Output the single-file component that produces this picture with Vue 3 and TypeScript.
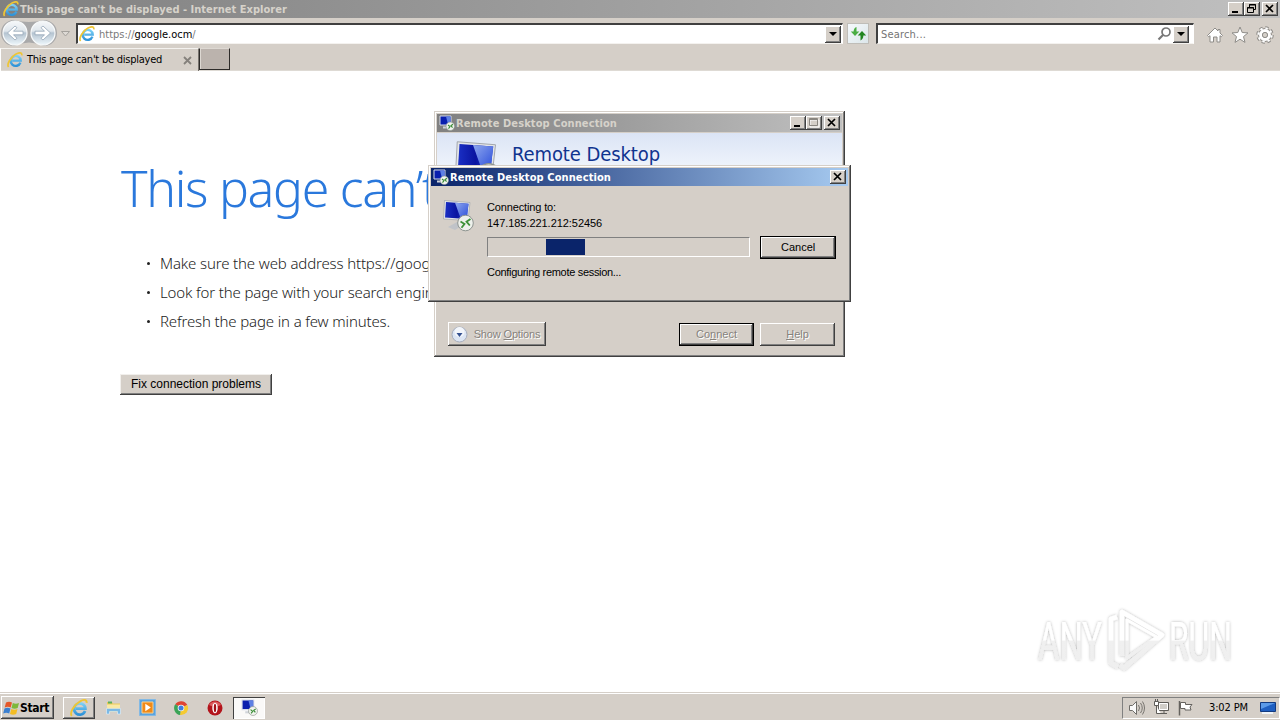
<script setup lang="ts">
const tips: string[] = [
  'Make sure the web address https://google.ocm is correct.',
  'Look for the page with your search engine.',
  'Refresh the page in a few minutes.',
]
</script>

<template>
  <div class="desktop">
    <svg class="defs" width="0" height="0" aria-hidden="true">
      <defs>
        <linearGradient id="ieBlue" x1="0" y1="0" x2="0" y2="1">
          <stop offset="0" stop-color="#7cd0f6" />
          <stop offset="1" stop-color="#2f93d8" />
        </linearGradient>
        <linearGradient id="screen" x1="0" y1="0" x2="1" y2="0">
          <stop offset="0" stop-color="#1a2fc4" />
          <stop offset=".5" stop-color="#0a14a0" />
          <stop offset="1" stop-color="#2444d6" />
        </linearGradient>
        <linearGradient id="glare" x1="0" y1="0" x2="1" y2="1">
          <stop offset="0" stop-color="#8fa8ee" />
          <stop offset="1" stop-color="#2a4cda" />
        </linearGradient>
        <linearGradient id="orb" x1="0" y1="0" x2="0" y2="1">
          <stop offset="0" stop-color="#f6f8fa" />
          <stop offset=".42" stop-color="#dfe6ec" />
          <stop offset=".5" stop-color="#b4c3d0" />
          <stop offset="1" stop-color="#eef7fc" />
        </linearGradient>
      </defs>
      <symbol id="ie" viewBox="0 0 16 16">
        <path d="M13.400 10.600A5 5 0 1 1 13.700 8.600H5.200" fill="none" stroke="url(#ieBlue)" stroke-width="2.400" />
        <path d="M1.600 15C-.6 12.600 3.500 5 9 2.100 12.400.2 15.200.2 14.800 3.400" fill="none" stroke="#eec536" stroke-width="1.700" />
      </symbol>
      <symbol id="rdc" viewBox="0 0 32 32">
        <path d="M5 27l9-5 6 3-8 5z" fill="#c0c3c8" />
        <path d="M1.500.5L27 2.500 25 20.500.5 19z" fill="#e3e5e8" stroke="#9b9fa5" stroke-width=".6" />
        <path d="M3 2l22.500 1.700L23.700 19 2 17.500z" fill="url(#screen)" />
        <path d="M12 2.700l13.500 1L23.700 19l-6-.4z" fill="url(#glare)" />
        <circle cx="22.500" cy="23" r="7.800" fill="#eef1ec" stroke="#8e9490" stroke-width="1" />
        <path d="M17.500 21.500l4 2.500-3 3.800M27.500 19l-4 2.700 3.300 3.800" fill="none" stroke="#3d9138" stroke-width="1.800" />
      </symbol>
      <symbol id="rdc16" viewBox="0 0 16 16">
        <path d="M1 1h11v9H1z" fill="#0a1fae" stroke="#d5dbe8" />
        <path d="M7 1.500h4.500v8H9z" fill="#5d80e4" />
        <path d="M4 11.500h5v2H4z" fill="#d0d4da" />
        <circle cx="11.300" cy="11.300" r="4.200" fill="#f1f4ef" stroke="#8d948e" stroke-width=".6" />
        <path d="M9 10l2 1.600-1.500 2M13.900 9.300l-1.900 1.400 1.500 1.900" fill="none" stroke="#378b33" stroke-width="1.100" />
      </symbol>
      <symbol id="close" viewBox="0 0 16 14">
        <path d="M4 3l7 7M11 3l-7 7" stroke="#000" stroke-width="1.700" />
      </symbol>
    </svg>

    <header class="titlebar">
      <svg class="i16"><use href="#ie" /></svg>
      <span class="title">This page can't be displayed - Internet Explorer</span>
      <div class="controls">
        <i class="ctl"><svg width="16" height="14"><path d="M4 9h6v2H4z" /></svg></i>
        <i class="ctl"><svg width="16" height="14"><path d="M5.500 5V2.500h6v5H9M5 3h7M3.500 5.500h6v5h-6zM3 6h7" fill="none" stroke="#000" /></svg></i>
        <i class="ctl gap"><svg width="16" height="14"><use href="#close" /></svg></i>
      </div>
    </header>

    <nav class="navbar">
      <svg class="orbs" width="76" height="29">
        <path d="M14 2Q29 6 44 2A13 13 0 0 1 44 28Q29 21 14 28A13 13 0 0 1 14 2Z" fill="#a9a9aa" />
        <circle cx="15" cy="15" r="12" fill="url(#orb)" stroke="#f7f9fa" stroke-width="1.200" />
        <circle cx="43" cy="15" r="12" fill="url(#orb)" stroke="#f7f9fa" stroke-width="1.200" />
        <path d="M23 13.200h-9.500l3.500-3.500-2-1.700-7.500 7 7.500 7 2-1.700-3.500-3.500H23zM35 13.200h9.500L41 9.700 43 8l7.500 7-7.500 7-2-1.700 3.500-3.500H35z" fill="#fff" stroke="#94a6b7" stroke-width=".8" />
        <path d="M61.500 13.500h8l-4 4.500z" fill="#dedad5" stroke="#a5a29d" />
      </svg>
      <div class="address field">
        <svg class="i16"><use href="#ie" /></svg>
        <span class="url">https://<b>google.ocm</b>/</span>
        <i class="drop"></i>
      </div>
      <div class="refresh">
        <svg width="20" height="19"><path d="M8.500 3v4.500h2.800L7 12 2.800 7.500h2.800C5.600 5.300 7 3.500 8.500 3z" fill="#4aad43" /><path d="M12.500 16.500v-5H9.700L14 7l4.200 4.500h-2.800c0 2.500-1.400 4.500-2.900 5z" fill="#238622" /></svg>
      </div>
      <div class="search field">
        <span class="hint">Search...</span>
        <svg width="15" height="16"><circle cx="9" cy="6" r="4" fill="none" stroke="#777" stroke-width="1.700" /><path d="M6 9l-4.500 4.500" stroke="#777" stroke-width="2.200" /></svg>
        <i class="drop"></i>
      </div>
      <div class="tools">
        <svg width="18" height="18"><path d="M1.500 9.500L9 2l3 3V3.500h2V7l2.500 2.500-1.200 1.200-1.300-1V16H11v-5H7.500v5H4V9.700l-1.300 1z" fill="#fff" stroke="#8e8c88" /></svg>
        <svg width="18" height="18"><path d="M9 1l2.200 5.500 5.800.4-4.500 3.700 1.500 5.800-5-3.200-5 3.200 1.500-5.800L1 6.900l5.800-.4z" fill="#fff" stroke="#8e8c88" /></svg>
        <svg width="18" height="18"><circle cx="9" cy="9" r="7" fill="none" stroke="#8e8c88" stroke-width="3.500" stroke-dasharray="3.100 2.398" /><circle cx="9" cy="9" r="4.500" fill="none" stroke="#8e8c88" stroke-width="5" /><circle cx="9" cy="9" r="6.700" fill="none" stroke="#fff" stroke-width="2" stroke-dasharray="2.400 2.862" stroke-dashoffset="-.2" /><circle cx="9" cy="9" r="4.300" fill="none" stroke="#fff" stroke-width="3.300" /><circle cx="9" cy="9" r="2.600" fill="#d5d0c9" stroke="#8e8c88" /></svg>
      </div>
    </nav>

    <div class="tabs">
      <div class="tab">
        <svg class="i16"><use href="#ie" /></svg>
        <span class="tabname">This page can't be displayed</span>
        <svg class="tabclose" width="9" height="9"><path d="M1 1l7 7M8 1L1 8" stroke="#85817c" stroke-width="1.800" /></svg>
      </div>
      <div class="newtab"></div>
    </div>

    <main class="page">
      <h1>This page can’t be displayed</h1>
      <ul>
        <li v-for="tip in tips" :key="tip">{{ tip }}</li>
      </ul>
      <button class="fix">Fix connection problems</button>
    </main>

    <svg class="watermark" width="240" height="84" viewBox="1024 600 240 84">
      <defs>
        <linearGradient id="wm" gradientUnits="userSpaceOnUse" x1="0" y1="610" x2="0" y2="670">
          <stop offset="0" stop-color="#fff" />
          <stop offset=".5" stop-color="#fff" />
          <stop offset=".52" stop-color="#f0f0f0" />
          <stop offset="1" stop-color="#efefef" />
        </linearGradient>
        <filter id="soft" x="-10%" y="-20%" width="120%" height="140%">
          <feDropShadow dx="0" dy="0" stdDeviation="1.600" flood-color="#000" flood-opacity=".3" />
        </filter>
      </defs>
      <g filter="url(#soft)" fill="url(#wm)">
        <text x="1038" y="660" textLength="64" lengthAdjust="spacingAndGlyphs">ANY</text>
        <text x="1169" y="660" textLength="63" lengthAdjust="spacingAndGlyphs">RUN</text>
        <g fill="none" stroke="url(#wm)" stroke-width="4.500" stroke-linejoin="round">
          <path d="M1117 617l-6 2v44l7 4" />
          <path d="M1122 656V612l40 23-38 33-4-3" />
          <path d="M1127 620v38l30-21z" stroke-width="3" />
        </g>
      </g>
    </svg>

    <section class="window back">
      <div class="caption inactive">
        <svg class="i16"><use href="#rdc16" /></svg>
        <span class="title">Remote Desktop Connection</span>
        <div class="controls">
          <i class="ctl"><svg width="16" height="14"><path d="M4 9h6v2H4z" /></svg></i>
          <i class="ctl"><svg width="16" height="14"><path d="M4 4h9v7H4z" fill="none" stroke="#fff" /><path d="M3.500 2.500h8v7h-8zM3 3.500h9" fill="none" stroke="#8a8680" /></svg></i>
          <i class="ctl gap"><svg width="16" height="14"><use href="#close" /></svg></i>
        </div>
      </div>
      <div class="banner">
        <svg width="48" height="48"><use href="#rdc" /></svg>
        <span>Remote Desktop</span>
      </div>
      <div class="footer">
        <button class="btn disabled options">
          <svg width="17" height="17"><circle cx="8.500" cy="8.500" r="7.500" fill="#dce5f3" stroke="#a7aebd" /><circle cx="8.500" cy="6" r="5" fill="#f3f6fb" /><path d="M5.500 7h6l-3 4z" fill="#34508f" /></svg>
          <span>Show <u>O</u>ptions</span>
        </button>
        <button class="btn disabled default"><span>Co<u>n</u>nect</span></button>
        <button class="btn disabled"><span><u>H</u>elp</span></button>
      </div>
    </section>

    <section class="window front">
      <div class="caption active">
        <svg class="i16"><use href="#rdc16" /></svg>
        <span class="title">Remote Desktop Connection</span>
        <div class="controls">
          <i class="ctl"><svg width="16" height="14"><use href="#close" /></svg></i>
        </div>
      </div>
      <div class="body">
        <svg class="big" width="32" height="32"><use href="#rdc" /></svg>
        <div class="status">
          <p class="to">Connecting to:</p>
          <p class="ip">147.185.221.212:52456</p>
          <div class="progress"><div class="chunk"></div></div>
          <p class="conf">Configuring remote session...</p>
        </div>
        <button class="btn default cancel"><span>Cancel</span></button>
      </div>
    </section>

    <footer class="taskbar">
      <button class="start">
        <svg width="17" height="16"><path d="M3 2.500q3-1.700 6 0L7.700 7.500q-3-1.500-6 0z" fill="#e5582a" /><path d="M9.800 3q3 1.500 6.200 0l-1.300 5q-3 1.500-6.200 0z" fill="#7db83a" /><path d="M1.500 8.500q3-1.500 6 0l-1.300 5q-3-1.600-6 0z" fill="#3a7fd0" /><path d="M8.300 9q3 1.500 6.200 0l-1.300 5q-3 1.500-6.200 0z" fill="#f3bd24" /></svg>
        <span>Start</span>
      </button>
      <div class="task raised"><svg width="18" height="18"><use href="#ie" /></svg></div>
      <div class="task">
        <svg width="17" height="17"><path d="M2 3h5l1 1.500h7V13H2z" fill="#ecc95a" /><path d="M3 2.500h4v2H3z" fill="#59b05c" /><path d="M2 5.500h13V9H2z" fill="#f8e9a6" /><path d="M1.500 9.500h14V15h-3v-2.500h-8V15h-3z" fill="#7bb9e5" stroke="#e5f3fb" stroke-width=".6" /></svg>
      </div>
      <div class="task">
        <svg width="17" height="17"><path d="M.5.500h16v16H.5z" fill="#5aa3df" stroke="#83b9e4" /><path d="M3 3h11v11H3z" fill="#f08a18" stroke="#fbd08c" /><path d="M6.300 4.800v7.400l5.500-3.700z" fill="#fff" /></svg>
      </div>
      <div class="task">
        <svg width="16" height="16"><path d="M8 8L2.200 4.300A7 7 0 0 1 14.300 5z" fill="#df4433" /><path d="M8 8L14.300 5A7 7 0 0 1 7 15z" fill="#f5ca31" /><path d="M8 8L7 15A7 7 0 0 1 2.200 4.300z" fill="#3ba457" /><circle cx="8" cy="8" r="3.300" fill="#f5f5f5" /><circle cx="8" cy="8" r="2.500" fill="#3f7de0" /></svg>
      </div>
      <div class="task">
        <svg width="16" height="16"><circle cx="8" cy="8" r="7.500" fill="#b3141b" /><path d="M2 5a7 7 0 0 1 12 0q-6 3-12 0z" fill="#dc5b5d" /><ellipse cx="8" cy="8" rx="2.700" ry="5.300" fill="#fff" /><ellipse cx="8" cy="8" rx="1.200" ry="4.200" fill="#a20f16" /></svg>
      </div>
      <div class="task pressed"><svg width="17" height="17"><use href="#rdc16" /></svg></div>
      <div class="tray">
        <svg width="18" height="16"><path d="M1.500 5.500h3l4-4v13l-4-4h-3z" fill="#fafafa" stroke="#6f6d69" /><path d="M10.500 5q2 3 0 6M12.500 3q3.500 5 0 10M14.500 1.500q4 6.500 0 13" fill="none" stroke="#77746f" /></svg>
        <svg width="17" height="17"><path d="M5.500 3.500h10v8h-10z" fill="#d0cdc8" stroke="#5e5c58" /><path d="M6.500 4.500h8v6h-8z" fill="none" stroke="#fff" /><path d="M8 14.500h6M11 12v2" stroke="#5e5c58" /><path d="M1.500 2.500h4v4h-4zM2.500 0v2M4.500 0v2M3.500 7v7.500H8" fill="#fff" stroke="#5e5c58" /></svg>
        <svg class="flag" width="17" height="16"><path d="M2.500 1v14.500" stroke="#65625e" stroke-width="1.500" /><path d="M3.500 2.500h5v2h6.500l-2 2.500 1 3H8V8.500H3.500z" fill="#fff" stroke="#65625e" /></svg>
        <span class="clock">3:02 PM</span>
        <svg width="16" height="15"><path d="M.5 2.500h15v9H.5z" fill="#1f5fc1" stroke="#123a80" /><path d="M1 3h14L1 9z" fill="#5b9ae8" /><path d="M2 13h11" stroke="#eef3f8" stroke-width="2" /></svg>
      </div>
    </footer>
  </div>
</template>

<style>
body { margin: 0; overflow: hidden; }
</style>

<style scoped>
.desktop {
  position: relative; width: 1280px; height: 720px; overflow: hidden;
  display: flex; flex-direction: column; background: #fff; color: #000;
  font: 11px/14px "DejaVu Sans Condensed", "Noto Sans", sans-serif;
}
.desktop * { box-sizing: border-box; }
.defs { position: absolute; }
svg { display: block; flex: none; }
p, h1, ul { margin: 0; padding: 0; }
button { font: inherit; color: inherit; padding: 0; border-radius: 0; }
.i16 { width: 16px; height: 16px; }
.title { font-weight: bold; white-space: nowrap; padding-top: 2px; }

.titlebar { height: 18px; display: flex; align-items: center; padding: 0 2px 0 3px; background: linear-gradient(90deg, #808080, #c0c0c0); color: #d6d2ca; }
.titlebar .title { margin-left: 1px; letter-spacing: .02px; }
.controls { display: flex; margin-left: auto; }
.ctl { width: 16px; height: 14px; background: #d5cfc8; box-shadow: inset -1px -1px #404040, inset 1px 1px #fff, inset -2px -2px #808080; }
.ctl.gap { margin-left: 2px; }

.navbar { height: 29px; display: flex; align-items: flex-start; background: #d5cfc8; }
.orbs { flex: none; }
.field { height: 21px; margin-top: 5px; display: flex; align-items: center; background: #fff; border: 1px solid #404040; border-top-width: 2px; border-left-width: 2px; border-right-color: #fff; border-bottom-color: #f4f2ef; }
.address { width: 767px; padding-left: 1px; padding-right: 1px; }
.url { margin-left: 4px; padding-top: 1px; color: #7a7a7a; flex: 1; }
.url b { color: #000; font-weight: normal; }
.drop { width: 16px; height: 17px; background: #d5cfc8; box-shadow: inset -1px -1px #404040, inset 1px 1px #fff, inset -2px -2px #808080; display: grid; place-items: center; }
.drop::after { content: ""; border: 4px solid transparent; border-top-color: #000; border-bottom: 0; }
.refresh { width: 22px; height: 21px; margin: 5px 0 0 4px; border: 1px solid #bfbdb8; background: linear-gradient(135deg, #f5f9fc, #dce6ea); }
.search { width: 318px; margin-left: 7px; padding-right: 4px; }
.hint { flex: 1; margin-left: 3px; padding-top: 1px; color: #747474; letter-spacing: .18px; }
.search svg { margin-right: 1px; }
.tools { display: flex; gap: 7px; margin: 8px 0 0 12px; }

.tabs { height: 24px; display: flex; background: #d5cfc8; border-bottom: 1px solid #dedad4; }
.tab { width: 199px; height: 23px; margin-top: 1px; display: flex; align-items: center; padding: 0 0 0 6px; border-left: 1px solid #fff; border-top: 1px solid #f4f2ef; border-right: 1px solid #77736e; }
.tabname { margin-left: 4px; width: 152px; letter-spacing: -.24px; white-space: nowrap; }
.tabclose { margin-left: 4px; }
.newtab { width: 31px; height: 22px; margin-top: 1px; background: #bbb3ad; border: 1px solid #fff; border-left-color: #2d2b29; border-top-color: #ddd8d2; border-right: 1px solid #2d2b29; border-bottom: 1px solid #2d2b29; box-shadow: inset 1px 0 #ddd8d2; }

.page { flex: 1; padding: 83px 0 0 120px; font-family: "Noto Sans", "Open Sans", sans-serif; font-weight: 300; }
h1 { margin-left: 1px; font-size: 50px; line-height: 68px; font-weight: 300; letter-spacing: -1.3px; color: #2a78dc; white-space: nowrap; }
ul { margin-top: 27px; list-style: none; }
li { position: relative; height: 29px; padding-left: 40px; font-size: 15px; line-height: 29px; letter-spacing: -.14px; color: #222; white-space: nowrap; }
li::before { content: ""; position: absolute; left: 27px; top: 13px; width: 3px; height: 3px; border-radius: 50%; background: #222; }
.fix { display: block; width: 152px; height: 21px; margin-top: 38px; border: 0; background: #d5cfc8; font: 12px/19px "Liberation Sans", Arial, sans-serif; color: #000; box-shadow: inset -1px -1px #404040, inset 1px 1px #f1efec, inset -2px -2px #808080; }

.watermark { position: absolute; left: 1024px; top: 600px; font: 400 53px Roboto, sans-serif; }

.window { position: absolute; background: #d5cfc8; box-shadow: inset -1px -1px #404040, inset 1px 1px #d5cfc8, inset -2px -2px #808080, inset 2px 2px #fff; padding: 3px; }
.back { left: 434px; top: 111px; width: 411px; height: 246px; }
.front { left: 428px; top: 165px; width: 423px; height: 137px; }
.caption { height: 18px; display: flex; align-items: center; padding: 0 2px; }
.caption .title { margin-left: 1px; letter-spacing: .1px; }
.inactive { background: linear-gradient(90deg, #808080, #c0c0c0); color: #d6d2ca; }
.active { background: linear-gradient(90deg, #0a246a, #a6caf0); color: #fff; }
.banner { height: 64px; margin-top: 1px; display: flex; padding: 8px 0 0 18px; background: linear-gradient(#dbe4f5, #f3f7fd 42px); color: #10348f; font-size: 20px; line-height: 26px; letter-spacing: -.09px; }
.banner svg { width: 48px; height: 48px; margin-right: 9px; }
.footer { display: flex; align-items: center; margin: 125px 7px 0 11px; height: 24px; gap: 6px; }

.btn { width: 75px; height: 23px; border: 0; display: flex; align-items: center; justify-content: center; background: #d5cfc8; font: 11px/13px "Liberation Sans", Arial, sans-serif; box-shadow: inset -1px -1px #404040, inset 1px 1px #fff, inset -2px -2px #808080; }
.btn.default { border: 1px solid #000; }
.btn.disabled { color: #86827c; text-shadow: 1px 1px #fff; }
.options { width: 98px; height: 24px; margin-right: auto; padding: 1px 3px 0 0; letter-spacing: -.15px; }
.options svg { margin-right: 6px; }
.body { display: flex; align-items: flex-start; padding: 13px 12px 0 12px; font: 11px/16px "Liberation Sans", Arial, sans-serif; }
.big { margin-top: 1px; }
.status { width: 264px; margin-left: 12px; white-space: nowrap; }
.to { letter-spacing: -.14px; }
.ip { letter-spacing: -.05px; }
.conf { margin-top: 7px; letter-spacing: -.31px; }
.progress { height: 20px; margin-top: 6px; padding: 1px 0 0 58px; border: 1px solid; border-color: #808080 #fff #fff #808080; }
.chunk { width: 39px; height: 16px; background: #0a246a; }
.cancel { width: 76px; margin: 37px 0 0 10px; }

.taskbar { height: 28px; display: flex; align-items: center; padding: 2px 0 0 1px; background: #d5cfc8; border-top: 1px solid #d5cfc8; box-shadow: inset 0 1px #fff; }
.start { width: 53px; height: 23px; border: 0; display: flex; align-items: center; padding-left: 2px; background: #d5cfc8; font: bold 12px/14px "DejaVu Sans Condensed", sans-serif; letter-spacing: -.34px; box-shadow: inset -1px -1px #404040, inset 1px 1px #fff, inset -2px -2px #808080; }
.start + .task { margin-left: 9px; }
.task { width: 32px; height: 22px; margin-right: 2px; display: grid; place-items: center; }
.raised { box-shadow: inset -1px -1px #404040, inset 1px 1px #fff, inset -2px -2px #808080; }
.pressed { background: #faf9f8; box-shadow: inset 1px 1px #404040, inset -1px -1px #fff; }
.tray { width: 158px; height: 22px; margin-left: auto; display: flex; align-items: center; padding: 0 3px 0 5px; border: 1px solid; border-color: #808080 #fff #fff #808080; }
.tray svg + svg { margin-left: 7px; }
.clock { margin-left: 15px; letter-spacing: -.13px; white-space: nowrap; }
.clock + svg { margin-left: auto; }
</style>
